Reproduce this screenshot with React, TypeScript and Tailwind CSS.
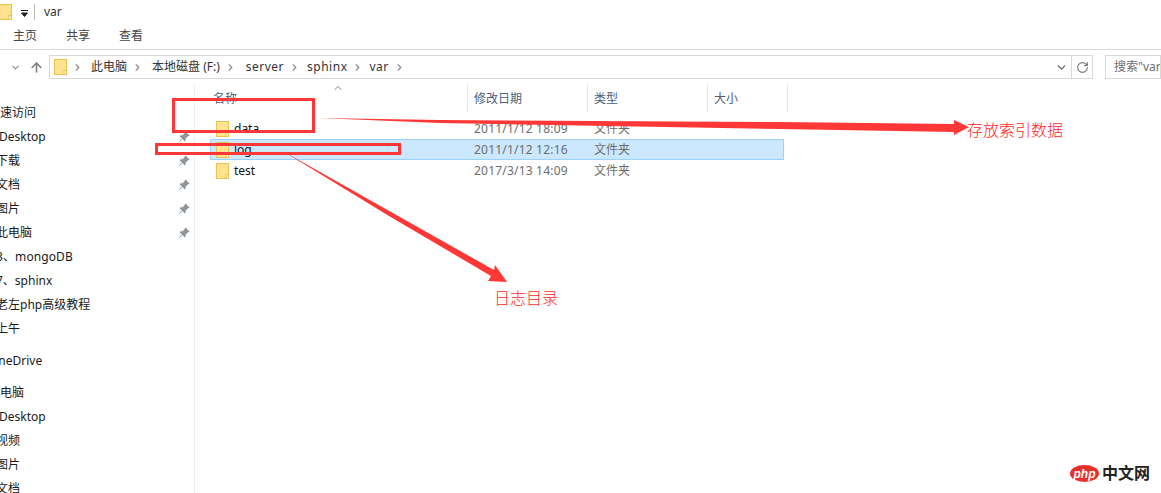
import { BsPinAngleFill } from "react-icons/bs";
import { ArrowUp, ChevronDown, ChevronRight, ChevronUp, RotateCw } from "lucide-react";

const FolderIcon = ({ className = "" }: { className?: string }) => (
  <svg width="13" height="16" viewBox="0 0 13 16" className={className}>
    <rect x="0.5" y="0.5" width="12" height="15" fill="#ffe38f" stroke="#e9c350" />
    <rect x="10" y="11.5" width="2.5" height="4" fill="#fff3c4" stroke="#e9c350" />
  </svg>
);

const sidebarRows = [
  { label: "快速访问", cls: "ml-[-12px]", pin: false },
  { label: "Desktop", cls: "ml-[-1px]", pin: true },
  { label: "下载", cls: "ml-[-4px]", pin: true },
  { label: "文档", cls: "ml-[-4px]", pin: true },
  { label: "图片", cls: "ml-[-4px]", pin: true },
  { label: "此电脑", cls: "ml-[-4px]", pin: true },
  { label: "3、mongoDB", cls: "ml-[-4px] tracking-[0.1px]", pin: false },
  { label: "7、sphinx", cls: "ml-[-4px]", pin: false },
  { label: "老左php高级教程", cls: "ml-[-4px]", pin: false },
  { label: "上午", cls: "ml-[-4px]", pin: false },
  { label: "OneDrive", cls: "ml-[-11px] mt-2", pin: false },
  { label: "此电脑", cls: "ml-[-12px] mt-2", pin: false },
  { label: "Desktop", cls: "ml-[-1px]", pin: false },
  { label: "视频", cls: "ml-[-4px]", pin: false },
  { label: "图片", cls: "ml-[-4px]", pin: false },
  { label: "文档", cls: "ml-[-4px]", pin: false },
];

const files = [
  { name: "data", date: "2011/1/12 18:09", selected: false },
  { name: "log", date: "2011/1/12 12:16", selected: true },
  { name: "test", date: "2017/3/13 14:09", selected: false },
];

const crumbs = [
  { label: "此电脑", cls: "ml-[8px]" },
  { label: "本地磁盘 (F:)", cls: "ml-[9px]" },
  { label: "server", cls: "ml-[10px] tracking-[0.5px]" },
  { label: "sphinx", cls: "ml-[7px] tracking-[0.5px]" },
  { label: "var", cls: "ml-[6px] tracking-[0.5px]" },
];

const App = () => {
  return (
    <div className="relative h-[493px] w-[1161px] overflow-hidden bg-white text-[12px] text-[#1a1a1a] font-['Noto_Sans','Noto_Sans_CJK_SC',sans-serif]">
      {/* 제목 줄 */}
      <div className="flex h-6 items-center">
        <FolderIcon className="ml-[-1px]" />
        <svg width="7" height="7" viewBox="0 0 7 7" className="ml-[9px] mt-[3px]">
          <path d="M0 0.5h7M0.5 3h6L3.5 6.5z" fill="#222" stroke="#222" strokeWidth="1" />
        </svg>
        <div className="ml-[6px] h-4 w-px bg-[#b9b9b9]" />
        <span className="ml-[9px] text-[#333]">var</span>
      </div>

      {/* 탭 */}
      <div className="flex h-[26px] items-center gap-[29px] border-b border-[#dadada] pb-[1px] pl-[13px] text-[#444]">
        <span>主页</span>
        <span>共享</span>
        <span>查看</span>
      </div>

      {/* 주소 줄 */}
      <div className="mt-[5px] flex h-6 items-center">
        <ChevronDown size={11} strokeWidth={2.5} className="ml-[10px] text-[#8d8d8d]" />
        <ArrowUp size={15} strokeWidth={2.5} className="ml-[8px] text-[#7f7f7f]" />
        <div className="ml-[5px] flex h-6 w-[1044px] items-center border border-[#d9d9d9]">
          <FolderIcon className="ml-[4px]" />
          <ChevronRight size={11} strokeWidth={2.5} className="ml-[5px] text-[#8d8d8d]" />
          {crumbs.map((c, i) => (
            <div key={i} className="flex items-center">
              <span className={`text-[#333] ${c.cls}`}>{c.label}</span>
              <ChevronRight size={11} strokeWidth={2.5} className="ml-[5px] text-[#8d8d8d]" />
            </div>
          ))}
          <ChevronDown size={13} strokeWidth={2.5} className="ml-auto mr-[2px] text-[#666]" />
          <div className="ml-[1px] flex h-full w-[21px] items-center justify-center border-l border-[#d9d9d9]">
            <RotateCw size={13} strokeWidth={2} className="text-[#777]" />
          </div>
        </div>
        <div className="ml-[12px] flex h-6 flex-1 items-center overflow-hidden border border-[#d9d9d9] pl-[8px] whitespace-nowrap text-[#6d6d6d]">
          搜索"var"
        </div>
      </div>

      {/* 본문 */}
      <div className="mt-[6px] flex">
        <div className="h-[408px] w-[195px] shrink-0 overflow-hidden border-r border-[#f0f0f0] pt-[16px]">
          {sidebarRows.map((r, i) => (
            <div key={i} className={`flex h-6 items-center whitespace-nowrap ${r.cls}`}>
              <span>{r.label}</span>
              {r.pin && <BsPinAngleFill size={12} className="absolute left-[178px] text-[#8d959b]" />}
            </div>
          ))}
        </div>

        <div className="min-w-0 flex-1">
          <div className="relative flex h-[27px] text-[#4c607a]">
            <ChevronUp size={12} strokeWidth={1.5} className="absolute left-[137px] top-[-3px] text-[#555]" />
            <div className="w-[272px] pl-[18px] leading-[28px]">名称</div>
            <div className="w-[120px] border-l border-[#e5e5e5] pl-[6px] leading-[27px]">修改日期</div>
            <div className="w-[120px] border-l border-[#e5e5e5] pl-[6px] leading-[27px]">类型</div>
            <div className="w-[81px] border-x border-[#e5e5e5] pl-[6px] leading-[27px]">大小</div>
          </div>
          <div className="ml-[15px] mt-[6px] w-[574px]">
            {files.map((f) => (
              <div
                key={f.name}
                className={`flex h-[21px] items-center border ${
                  f.selected ? "border-[#99d1ff] bg-[#cce8ff]" : "border-transparent"
                }`}
              >
                <FolderIcon className="ml-[5px] shrink-0" />
                <span className="ml-[5px] w-[240px] text-[#111]">{f.name}</span>
                <span className="w-[120px] tracking-[0.2px] text-[#6d6d6d]">{f.date}</span>
                <span className="text-[#6d6d6d]">文件夹</span>
              </div>
            ))}
          </div>
        </div>
      </div>

      {/* 빨간 주석 */}
      <div className="absolute left-[172px] top-[98px] h-[35px] w-[143px] border-[3px] border-[#ff3737]" />
      <div className="absolute left-[155px] top-[143px] h-[12px] w-[246px] border-[3px] border-[#ff3737]" />
      <svg className="absolute left-0 top-0" width="1161" height="493" viewBox="0 0 1161 493">
        <polygon
          points="319,118 440,120 780,122 954,124 954,120 969,127 954,135 954,132 780,129 440,123"
          fill="#ff3737"
        />
        <polygon
          points="281,150 391,212 494,270 495,265 507,282 488,281 491,276 389,216"
          fill="#ff3737"
        />
      </svg>
      <span className="absolute left-[967px] top-[119px] text-[16px] leading-[22px] font-light text-[#ff1f1f]">存放索引数据</span>
      <span className="absolute left-[494px] top-[287px] text-[16px] leading-[22px] font-light text-[#ff1f1f]">日志目录</span>

      {/* 워터마크 */}
      <div className="absolute left-[1070px] top-[465px] flex items-center">
        <div className="flex h-[17px] w-[29px] items-center justify-center rounded-[50%] bg-[#e8302a] font-['Liberation_Sans',sans-serif] text-[12px] leading-none font-bold text-white italic">
          php
        </div>
        <span className="ml-[3px] text-[16px] leading-[17px] font-bold text-[#222]">中文网</span>
      </div>
    </div>
  );
};

export default App;
